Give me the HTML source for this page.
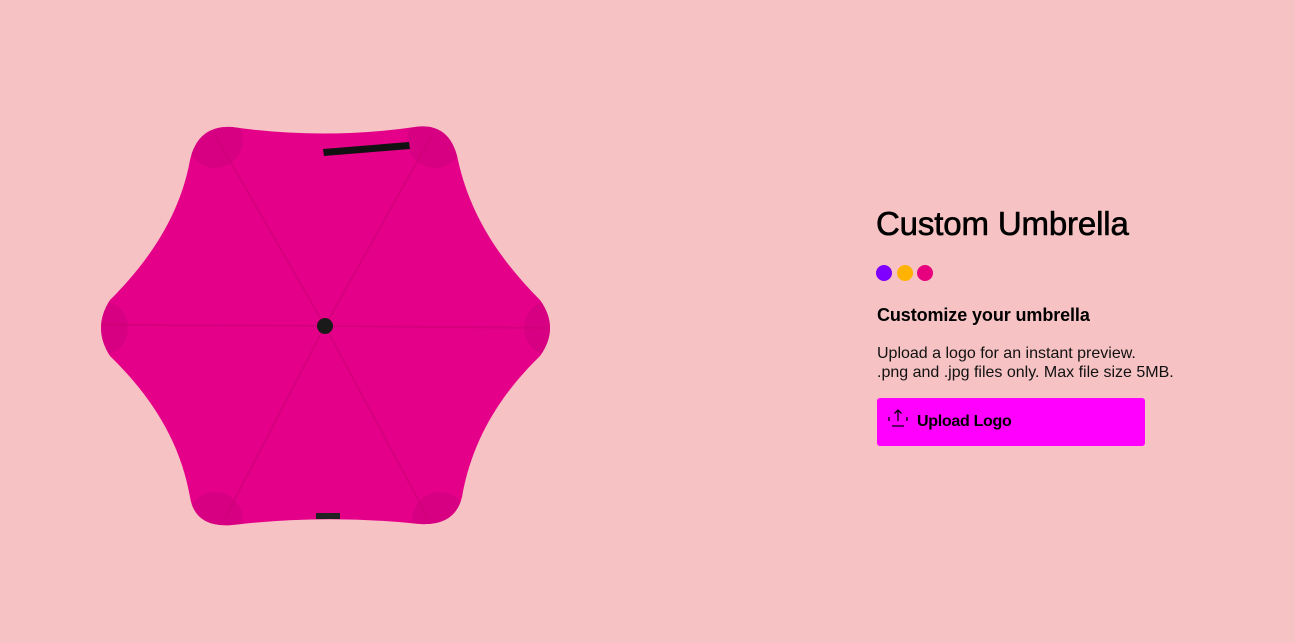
<!DOCTYPE html>
<html><head><meta charset="utf-8"><style>
html,body{margin:0;padding:0;width:1295px;height:643px;background:#f6c2c3;overflow:hidden;font-family:"Liberation Sans",Arial,sans-serif;color:#000}
svg.u{position:absolute;left:0;top:0}
h1{position:absolute;left:876px;top:205px;margin:0;font-size:33px;font-weight:400;letter-spacing:-0.15px;-webkit-text-stroke:0.6px #000}
.dot{position:absolute;top:265px;width:16px;height:16px;border-radius:50%}
h2{position:absolute;left:877px;top:305px;margin:0;font-size:18px;font-weight:700;letter-spacing:-0.1px}
p{position:absolute;left:877px;top:344px;margin:0;font-size:16px;line-height:19px;color:#111}
.btn{position:absolute;left:877px;top:398px;width:268px;height:48px;background:#ff00ff;border-radius:3px}
.btn span{position:absolute;left:40px;top:15px;font-size:16px;font-weight:700;letter-spacing:-0.3px}
</style></head><body>
<svg class="u" width="1295" height="643" viewBox="0 0 1295 643">
<defs><clipPath id="c"><path d="M232,127 Q325,140 415,127 Q450,122 458,160 C470,215 500,260 540,300 Q560,328 540,356 C500,395 472,440 462,497 Q455,526 420,524 Q325,514 232,525 Q195,528 190,497 C180,440 150,395 110,356 Q92,328 110,300 C150,260 180,215 190,160 Q198,125 232,127 Z"/></clipPath></defs>
<path d="M232,127 Q325,140 415,127 Q450,122 458,160 C470,215 500,260 540,300 Q560,328 540,356 C500,395 472,440 462,497 Q455,526 420,524 Q325,514 232,525 Q195,528 190,497 C180,440 150,395 110,356 Q92,328 110,300 C150,260 180,215 190,160 Q198,125 232,127 Z" fill="#e5008a"/>
<g fill="#d40080" opacity="0.8" clip-path="url(#c)">
<circle cx="215" cy="140" r="28"/><circle cx="435" cy="140" r="28"/>
<circle cx="552" cy="328" r="28"/><circle cx="100" cy="328" r="28"/>
<circle cx="215" cy="520" r="28"/><circle cx="440" cy="520" r="28"/>
</g>
<g stroke="#cc0075" stroke-width="2" opacity="0.6">
<line x1="325" y1="326" x2="215" y2="135"/><line x1="325" y1="326" x2="432" y2="135"/>
<line x1="325" y1="326" x2="548" y2="328"/><line x1="325" y1="326" x2="102" y2="325"/>
<line x1="325" y1="326" x2="225" y2="518"/><line x1="325" y1="326" x2="428" y2="518"/>
</g>
<circle cx="325" cy="326" r="8" fill="#1a1a1a"/>
<path d="M323,149 L409,142 L410,149 L324,156 Z" fill="#111"/>
<rect x="316" y="513" width="24" height="6" fill="#222"/>
</svg>
<h1>Custom Umbrella</h1>
<div class="dot" style="left:876px;background:#8000ff"></div>
<div class="dot" style="left:897px;background:#ffb300"></div>
<div class="dot" style="left:917px;background:#e6007e"></div>
<h2>Customize your umbrella</h2>
<p>Upload a logo for an instant preview.<br>.png and .jpg files only. Max file size 5MB.</p>
<div class="btn">
<svg style="position:absolute;left:10px;top:10px" width="22" height="22" viewBox="0 0 22 22" fill="none" stroke="#000" stroke-width="1.3">
<path d="M11,2 L11,13 M7.5,5.5 L11,2 L14.5,5.5"/>
<path d="M2,9 L2,13 M20,9 L20,13 M5,18 L17,18"/>
</svg>
<span>Upload Logo</span></div>
</body></html>
